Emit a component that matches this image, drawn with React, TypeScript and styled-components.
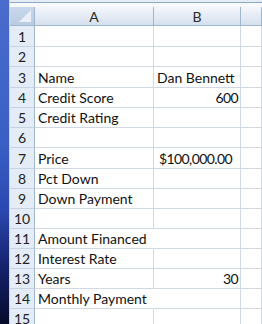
import React from "react";
import styled, { createGlobalStyle } from "styled-components";

const Global = createGlobalStyle`
  html, body { margin: 0; padding: 0; background: #fff; }
  body { width: 262px; height: 324px; overflow: hidden; }
  #root { width: 262px; height: 324px; }
`;

const Frame = styled.div`
  display: flex;
  width: 262px;
  height: 324px;
  overflow: hidden;
`;

const WindowEdge = styled.div`
  flex: 0 0 9px;
  background: linear-gradient(180deg, #4a6ccc 0%, #3a5fc4 45%, #2a48b0 65%, #15226e 82%, #060b2a 100%);
  border-right: 1px solid #c9d5e6;
`;

const Workbook = styled.div`
  flex: 1;
  display: flex;
  flex-direction: column;
  min-width: 0;
  background: #fff;
`;

const TopStrip = styled.div`
  height: 7px;
  flex: 0 0 7px;
  display: flex;
  flex-direction: column;
`;

const StripLight = styled.div`
  height: 2px;
  background: #e6ecf4;
`;

const StripLine = styled.div`
  height: 1px;
  background: #8fa7c8;
`;

const StripWhite = styled.div`
  height: 4px;
  background: #f7f9fc;
`;

const Sheet = styled.div`
  display: grid;
  grid-template-columns: 25px 119px 87px 1fr;
  grid-template-rows: 19px 21px 20px 21px 20px 20px 20px 21px repeat(7, 20px) 20px;
  font-family: Lato, "Liberation Sans", sans-serif;
  font-size: 14px;
  color: #111;
`;

const Corner = styled.div`
  box-sizing: border-box;
  position: relative;
  background: linear-gradient(180deg, #c9d8eb 0%, #b9cbe2 100%);
  border-right: 1px solid #9eb6ce;
  border-bottom: 1px solid #9eb6ce;
  overflow: hidden;
`;

const CornerTriangle = styled.svg`
  position: absolute;
  right: 3px;
  bottom: 3px;
`;

const ColHead = styled.div`
  box-sizing: border-box;
  display: flex;
  align-items: center;
  justify-content: center;
  background: linear-gradient(180deg, #f4f7fb 0%, #e4ebf5 50%, #d6e0ee 100%);
  border-right: 1px solid #9eb6ce;
  border-bottom: 1px solid #9eb6ce;
  color: #2a2a2a;
  font-size: 14px;
`;

const RowHead = styled.div`
  box-sizing: border-box;
  display: flex;
  align-items: flex-end;
  justify-content: center;
  padding-bottom: 1px;
  background: #e4ecf7;
  border-right: 1px solid #9eb6ce;
  border-bottom: 1px solid #c5d3e5;
  color: #222;
  line-height: 17px;
`;

const Cell = styled.div<{ $right?: boolean; $overflow?: boolean; $pad?: number }>`
  box-sizing: border-box;
  display: flex;
  align-items: flex-end;
  justify-content: ${(p) => (p.$right ? "flex-end" : "flex-start")};
  padding: 0 ${(p) => (p.$right ? p.$pad ?? 2 : 0)}px 1px ${(p) => (p.$right ? 0 : 3)}px;
  border-right: 1px solid ${(p) => (p.$overflow ? "transparent" : "#d0d7e5")};
  border-bottom: 1px solid #d0d7e5;
  white-space: nowrap;
  overflow: visible;
  line-height: 17px;
  letter-spacing: ${(p) => (p.$right ? "-0.6px" : "0")};
  position: relative;
  z-index: ${(p) => (p.$overflow ? 1 : 0)};
`;

type RowData = { n: number; a?: string; b?: string; right?: boolean; pad?: number; overflow?: boolean };

const rows: RowData[] = [
  { n: 1 },
  { n: 2 },
  { n: 3, a: "Name", b: "Dan Bennett" },
  { n: 4, a: "Credit Score", b: "600", right: true },
  { n: 5, a: "Credit Rating" },
  { n: 6 },
  { n: 7, a: "Price", b: "$100,000.00", right: true, pad: 8 },
  { n: 8, a: "Pct Down" },
  { n: 9, a: "Down Payment" },
  { n: 10 },
  { n: 11, a: "Amount Financed", overflow: true },
  { n: 12, a: "Interest Rate" },
  { n: 13, a: "Years", b: "30", right: true },
  { n: 14, a: "Monthly Payment", overflow: true },
  { n: 15 },
];

export default function App() {
  return (
    <>
      <Global />
      <Frame>
        <WindowEdge />
        <Workbook>
          <TopStrip>
            <StripLight />
            <StripLine />
            <StripWhite />
          </TopStrip>
          <Sheet>
            <Corner>
              <CornerTriangle width="12" height="12" viewBox="0 0 12 12">
                <polygon points="12,0 12,12 0,12" fill="#e9eff7" />
              </CornerTriangle>
            </Corner>
            <ColHead>A</ColHead>
            <ColHead>B</ColHead>
            <ColHead />
            {rows.map((r) => (
              <React.Fragment key={r.n}>
                <RowHead>{r.n}</RowHead>
                <Cell $overflow={r.overflow}>{r.a}</Cell>
                <Cell $right={r.right} $pad={r.pad}>
                  {r.b}
                </Cell>
                <Cell />
              </React.Fragment>
            ))}
          </Sheet>
        </Workbook>
      </Frame>
    </>
  );
}
